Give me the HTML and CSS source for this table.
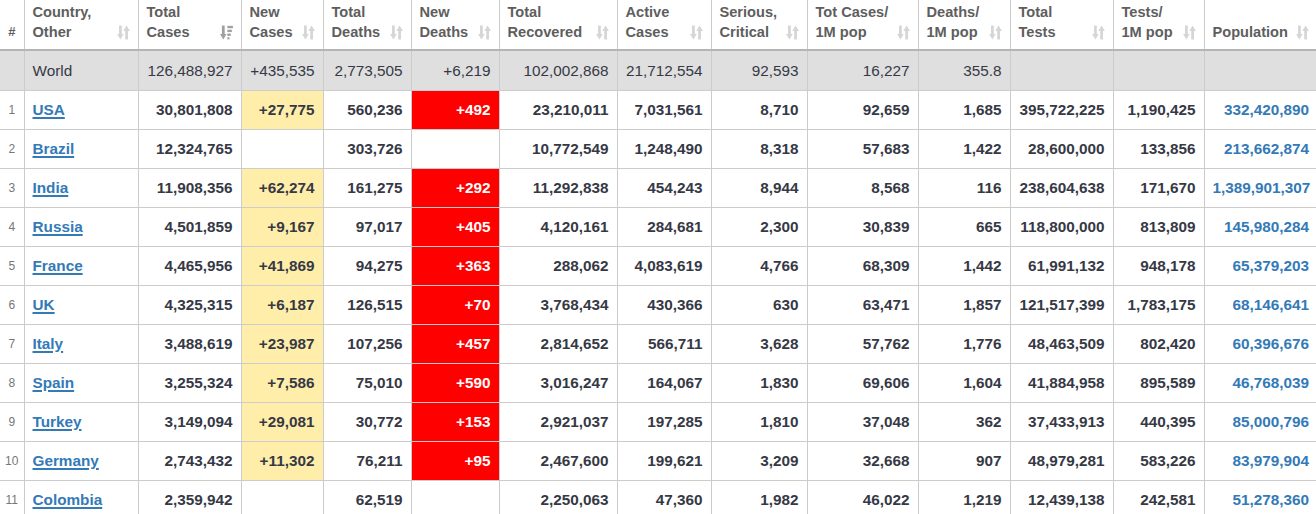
FILE: index.html
```html
<!DOCTYPE html>
<html lang="en">
<head>
<meta charset="utf-8">
<title>Coronavirus table</title>
<link rel="stylesheet" href="styles.css">
</head>
<body>
<svg class="defs" width="0" height="0" aria-hidden="true">
  <symbol id="sort" viewBox="0 0 12 14">
    <rect x="1.8" y="0.5" width="2.6" height="9"/>
    <polygon points="0,8.5 6.2,8.5 3.1,13.5"/>
    <rect x="7.6" y="4.5" width="2.6" height="9"/>
    <polygon points="5.8,5.5 12,5.5 8.9,0.5"/>
  </symbol>
  <symbol id="sortdesc" viewBox="0 0 12 14">
    <rect x="1.7" y="0.5" width="2.6" height="9"/>
    <polygon points="0,8.5 6,8.5 3,13.5"/>
    <rect x="6.8" y="0.8" width="5.2" height="2.2"/>
    <rect x="6.8" y="4.4" width="4.2" height="2.2"/>
    <rect x="6.8" y="8" width="3.2" height="2.2"/>
    <rect x="6.8" y="11.4" width="2" height="2"/>
  </symbol>
</svg>
<table class="main">
  <colgroup>
    <col class="c-num"><col class="c-country"><col class="c-tc"><col class="c-nc"><col class="c-td"><col class="c-nd"><col class="c-tr"><col class="c-ac"><col class="c-sc"><col class="c-tcm"><col class="c-dm"><col class="c-tt"><col class="c-ttm"><col class="c-pop">
  </colgroup>
  <thead>
    <tr>
      <th class="h-num">#</th>
      <th><div class="hd"><span>Country,<br>Other</span><svg class="si"><use href="#sort"/></svg></div></th>
      <th><div class="hd"><span>Total<br>Cases</span><svg class="si active"><use href="#sortdesc"/></svg></div></th>
      <th><div class="hd"><span>New<br>Cases</span><svg class="si"><use href="#sort"/></svg></div></th>
      <th><div class="hd"><span>Total<br>Deaths</span><svg class="si"><use href="#sort"/></svg></div></th>
      <th><div class="hd"><span>New<br>Deaths</span><svg class="si"><use href="#sort"/></svg></div></th>
      <th><div class="hd"><span>Total<br>Recovered</span><svg class="si"><use href="#sort"/></svg></div></th>
      <th><div class="hd"><span>Active<br>Cases</span><svg class="si"><use href="#sort"/></svg></div></th>
      <th><div class="hd"><span>Serious,<br>Critical</span><svg class="si"><use href="#sort"/></svg></div></th>
      <th><div class="hd"><span>Tot&nbsp;Cases/<br>1M pop</span><svg class="si"><use href="#sort"/></svg></div></th>
      <th><div class="hd"><span>Deaths/<br>1M pop</span><svg class="si"><use href="#sort"/></svg></div></th>
      <th><div class="hd"><span>Total<br>Tests</span><svg class="si"><use href="#sort"/></svg></div></th>
      <th><div class="hd"><span>Tests/<br>1M pop</span><svg class="si"><use href="#sort"/></svg></div></th>
      <th><div class="hd"><span>Population</span><svg class="si"><use href="#sort"/></svg></div></th>
    </tr>
  </thead>
  <tbody>
    <tr class="world">
      <td></td><td class="l">World</td><td>126,488,927</td><td>+435,535</td><td>2,773,505</td><td>+6,219</td><td>102,002,868</td><td>21,712,554</td><td>92,593</td><td>16,227</td><td>355.8</td><td></td><td></td><td></td>
    </tr>
    <tr>
      <td class="n">1</td><td class="l"><a href="#">USA</a></td><td>30,801,808</td><td class="nc">+27,775</td><td>560,236</td><td class="nd">+492</td><td>23,210,011</td><td>7,031,561</td><td>8,710</td><td>92,659</td><td>1,685</td><td>395,722,225</td><td>1,190,425</td><td class="pop">332,420,890</td>
    </tr>
    <tr>
      <td class="n">2</td><td class="l"><a href="#">Brazil</a></td><td>12,324,765</td><td></td><td>303,726</td><td></td><td>10,772,549</td><td>1,248,490</td><td>8,318</td><td>57,683</td><td>1,422</td><td>28,600,000</td><td>133,856</td><td class="pop">213,662,874</td>
    </tr>
    <tr>
      <td class="n">3</td><td class="l"><a href="#">India</a></td><td>11,908,356</td><td class="nc">+62,274</td><td>161,275</td><td class="nd">+292</td><td>11,292,838</td><td>454,243</td><td>8,944</td><td>8,568</td><td>116</td><td>238,604,638</td><td>171,670</td><td class="pop">1,389,901,307</td>
    </tr>
    <tr>
      <td class="n">4</td><td class="l"><a href="#">Russia</a></td><td>4,501,859</td><td class="nc">+9,167</td><td>97,017</td><td class="nd">+405</td><td>4,120,161</td><td>284,681</td><td>2,300</td><td>30,839</td><td>665</td><td>118,800,000</td><td>813,809</td><td class="pop">145,980,284</td>
    </tr>
    <tr>
      <td class="n">5</td><td class="l"><a href="#">France</a></td><td>4,465,956</td><td class="nc">+41,869</td><td>94,275</td><td class="nd">+363</td><td>288,062</td><td>4,083,619</td><td>4,766</td><td>68,309</td><td>1,442</td><td>61,991,132</td><td>948,178</td><td class="pop">65,379,203</td>
    </tr>
    <tr>
      <td class="n">6</td><td class="l"><a href="#">UK</a></td><td>4,325,315</td><td class="nc">+6,187</td><td>126,515</td><td class="nd">+70</td><td>3,768,434</td><td>430,366</td><td>630</td><td>63,471</td><td>1,857</td><td>121,517,399</td><td>1,783,175</td><td class="pop">68,146,641</td>
    </tr>
    <tr>
      <td class="n">7</td><td class="l"><a href="#">Italy</a></td><td>3,488,619</td><td class="nc">+23,987</td><td>107,256</td><td class="nd">+457</td><td>2,814,652</td><td>566,711</td><td>3,628</td><td>57,762</td><td>1,776</td><td>48,463,509</td><td>802,420</td><td class="pop">60,396,676</td>
    </tr>
    <tr>
      <td class="n">8</td><td class="l"><a href="#">Spain</a></td><td>3,255,324</td><td class="nc">+7,586</td><td>75,010</td><td class="nd">+590</td><td>3,016,247</td><td>164,067</td><td>1,830</td><td>69,606</td><td>1,604</td><td>41,884,958</td><td>895,589</td><td class="pop">46,768,039</td>
    </tr>
    <tr>
      <td class="n">9</td><td class="l"><a href="#">Turkey</a></td><td>3,149,094</td><td class="nc">+29,081</td><td>30,772</td><td class="nd">+153</td><td>2,921,037</td><td>197,285</td><td>1,810</td><td>37,048</td><td>362</td><td>37,433,913</td><td>440,395</td><td class="pop">85,000,796</td>
    </tr>
    <tr>
      <td class="n">10</td><td class="l"><a href="#">Germany</a></td><td>2,743,432</td><td class="nc">+11,302</td><td>76,211</td><td class="nd">+95</td><td>2,467,600</td><td>199,621</td><td>3,209</td><td>32,668</td><td>907</td><td>48,979,281</td><td>583,226</td><td class="pop">83,979,904</td>
    </tr>
    <tr>
      <td class="n">11</td><td class="l"><a href="#">Colombia</a></td><td>2,359,942</td><td></td><td>62,519</td><td></td><td>2,250,063</td><td>47,360</td><td>1,982</td><td>46,022</td><td>1,219</td><td>12,439,138</td><td>242,581</td><td class="pop">51,278,360</td>
    </tr>
  </tbody>
</table>
</body>
</html>
```
FILE: styles.css
```css
html, body {
  margin: 0;
  padding: 0;
  background: #ffffff;
}

body {
  font-family: "Liberation Sans", Arial, Helvetica, sans-serif;
  color: #363945;
  overflow: hidden;
}

.defs {
  position: absolute;
  width: 0;
  height: 0;
}

.main {
  border-collapse: collapse;
  table-layout: fixed;
  width: 1317px;
}

.c-num { width: 24px; }
.c-country { width: 114px; }
.c-tc { width: 103px; }
.c-nc { width: 82px; }
.c-td { width: 88px; }
.c-nd { width: 88px; }
.c-tr { width: 118px; }
.c-ac { width: 94px; }
.c-sc { width: 96px; }
.c-tcm { width: 111px; }
.c-dm { width: 92px; }
.c-tt { width: 103px; }
.c-ttm { width: 91px; }
.c-pop { width: 113px; }

.main th {
  height: 41px;
  padding: 1px 8px 7px 8px;
  border-left: 1px solid #cccccc;
  border-bottom: 2px solid #b4b4b4;
  vertical-align: bottom;
  text-align: left;
  font-size: 14.6px;
  line-height: 20px;
  font-weight: bold;
  color: #5e5e5e;
  white-space: nowrap;
}

.main th:first-child,
.main td:first-child {
  border-left: 0;
}

.main th.h-num {
  padding: 1px 0 7px 0;
  text-align: center;
  font-size: 13px;
}

.hd {
  display: flex;
  align-items: flex-end;
  justify-content: space-between;
}

.si {
  flex: none;
  width: 13px;
  height: 15px;
  margin-bottom: 2px;
  fill: #d6d6d6;
}

.si.active {
  fill: #a0a0a0;
}

.main td {
  height: 38px;
  padding: 0 8px;
  border-left: 1px solid #cccccc;
  border-bottom: 1px solid #cccccc;
  text-align: right;
  font-size: 15.3px;
  font-weight: bold;
  color: #363945;
  white-space: nowrap;
}

.main td.l {
  text-align: left;
}

.main td.n {
  padding: 0;
  text-align: center;
  font-size: 12px;
  font-weight: normal;
  color: #777777;
}

.main a {
  color: #337ab7;
  text-decoration: underline;
  text-decoration-thickness: 2px;
  text-underline-offset: 2px;
}

.world td {
  background: #dfdfdf;
  font-weight: normal;
  font-size: 15.3px;
  height: 39px;
}

.main td.nc {
  background: #ffeeaa;
}

.main td.nd {
  background: #ff0000;
  color: #ffffff;
}

.main td.pop {
  color: #337ab7;
}
```
